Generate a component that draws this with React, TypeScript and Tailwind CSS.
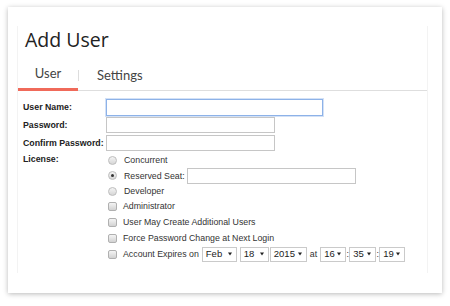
import React from "react";

const Radio = ({ checked }: { checked?: boolean }) => (
  <span className="w-[9px] h-[9px] rounded-full border border-[#bdbdbd] bg-gradient-to-b from-[#f4f4f4] to-[#d6d6d6] flex items-center justify-center shrink-0">
    {checked && <span className="w-[3px] h-[3px] rounded-full bg-[#333]" />}
  </span>
);

const Check = () => (
  <span className="w-[9px] h-[9px] rounded-[2px] border border-[#b0b0b0] bg-gradient-to-b from-[#f4f4f4] to-[#d2d2d2] shrink-0" />
);

const Select = ({ value, w }: { value: string; w: string }) => (
  <div className={`${w} h-[15px] border border-[#cacaca] bg-white flex items-center justify-between pl-[3px] pr-[4px] text-[9.5px] text-[#222]`}>
    <span>{value}</span>
    <svg width="4" height="4" viewBox="0 0 4 4" className="shrink-0">
      <path d="M0 0.5h4L2 3.5z" fill="#222" />
    </svg>
  </div>
);

const Field = ({ label, focus }: { label: string; focus?: boolean }) => (
  <div className="flex items-center h-[16px]">
    <div className="w-[83px] font-bold text-[#222]">{label}</div>
    {focus ? (
      <div className="w-[217px] h-[17px] border border-[#8db2e8] shadow-[0_0_0_1px_#d3e1f6] bg-white" />
    ) : (
      <div className="w-[169px] h-[16px] border border-[#c6c6c6] bg-white" />
    )}
  </div>
);

export default function App() {
  return (
    <div className="w-[450px] h-[306px] bg-white pt-[7px] pl-[8px] overflow-hidden">
      <div className="w-[434px] h-[286px] bg-white shadow-[0_1px_5px_rgba(0,0,0,0.28)] pt-[19px] pl-[9px]">
        <div className="w-[411px] h-[247px] border-x border-[#f3f3f3] pt-[2px]">
          {/* title */}
          <h1 className="pl-[7px] text-[19.5px] leading-[24px] text-[#222] font-['Open_Sans',sans-serif]">Add User</h1>

          {/* tabs */}
          <div className="mt-[13px] flex items-end border-b border-[#dedede] font-['Lato',sans-serif] text-[13px] leading-[16px]">
            <div className="w-[60px] text-center text-[#444] pb-[7px] border-b-[3px] border-[#f06a5a] -mb-px">User</div>
            <div className="w-px h-[11px] bg-[#dddddd] mb-[9px]" />
            <div className="pl-[18px] pb-[7px] text-[#444]">Settings</div>
          </div>

          {/* form */}
          <div className="pt-[8px] pl-[5px] font-['Liberation_Sans',Arial,sans-serif] text-[8.8px] leading-[10px] flex flex-col gap-[2px]">
            <Field label="User Name:" focus />
            <Field label="Password:" />
            <Field label="Confirm Password:" />
            <div className="flex">
              <div className="w-[83px] font-bold text-[#222] pt-px">License:</div>
              <div className="flex flex-col pl-[2px] text-[#333]">
                <div className="flex items-center gap-[7px] h-[14px]">
                  <Radio />
                  <span>Concurrent</span>
                </div>
                <div className="flex items-center gap-[7px] h-[17px]">
                  <Radio checked />
                  <span>Reserved Seat:</span>
                  <div className="-ml-[5px] w-[169px] h-[16px] border border-[#c6c6c6] bg-white" />
                </div>
                <div className="flex items-center gap-[7px] h-[14px]">
                  <Radio />
                  <span>Developer</span>
                </div>
                <div className="flex items-center gap-[6px] h-[16px]">
                  <Check />
                  <span>Administrator</span>
                </div>
                <div className="flex items-center gap-[6px] h-[16px]">
                  <Check />
                  <span>User May Create Additional Users</span>
                </div>
                <div className="flex items-center gap-[6px] h-[16px]">
                  <Check />
                  <span>Force Password Change at Next Login</span>
                </div>
                <div className="flex items-center h-[16px]">
                  <Check />
                  <span className="ml-[6px] mr-[3px]">Account Expires on</span>
                  <Select value="Feb" w="w-[35px]" />
                  <span className="w-[3px]" />
                  <Select value="18" w="w-[29px]" />
                  <span className="w-px" />
                  <Select value="2015" w="w-[37px]" />
                  <span className="px-[3px]">at</span>
                  <Select value="16" w="w-[26px]" />
                  <span className="w-[3px] text-center">:</span>
                  <Select value="35" w="w-[27px]" />
                  <span className="w-[3px] text-center">:</span>
                  <Select value="19" w="w-[26px]" />
                </div>
              </div>
            </div>
          </div>
        </div>
      </div>
    </div>
  );
}
